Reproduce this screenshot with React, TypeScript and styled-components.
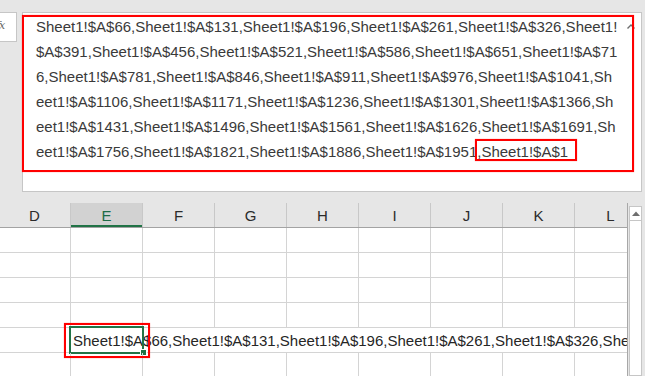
import React from "react";
import styled, { createGlobalStyle } from "styled-components";

const GlobalStyle = createGlobalStyle`
  html, body { margin: 0; padding: 0; background: #e6e6e6; overflow: hidden; }
  * { box-sizing: border-box; }
`;

const FONT = `"Liberation Sans", Arial, sans-serif`;

const Page = styled.div`
  position: relative;
  width: 645px;
  height: 376px;
  overflow: hidden;
  background: #e6e6e6;
  font-family: ${FONT};
`;

const FormulaArea = styled.div`
  display: flex;
  align-items: flex-start;
  gap: 5px;
  height: 203px;
  padding-top: 12px;
`;

const FxBox = styled.div`
  width: 30px;
  height: 30px;
  margin-left: -13px;
  background: #fff;
  border: 1px solid #c6c6c6;
  overflow: hidden;
  padding: 6px 0 0 8px;
  font-family: "DejaVu Serif", serif;
  font-style: italic;
  font-size: 11px;
  color: #666;
  letter-spacing: -1px;
`;

const FormulaBox = styled.div`
  position: relative;
  width: 620px;
  height: 180px;
  background: #fff;
  border: 1px solid #c6c6c6;
  padding: 1px 0 0 13px;
`;

const FormulaText = styled.div`
  width: 583px;
  font-size: 15px;
  line-height: 25px;
  color: #3a3a3a;
  word-break: break-all;
`;

const Caret = styled.svg`
  position: absolute;
  right: 6px;
  top: 11px;
`;

const SheetArea = styled.div`
  display: flex;
  height: 173px;
`;

const Grid = styled.div`
  width: 628px;
  height: 100%;
  overflow: hidden;
  background: #fff;
  border-right: 1px solid #a8a8a8;
`;

const HeaderRow = styled.div`
  display: flex;
  margin-left: -1px;
  height: 25px;
  background: #e6e6e6;
  border-bottom: 1px solid #a3a3a3;
`;

const HeaderCell = styled.div<{ $selected?: boolean }>`
  flex: 0 0 72px;
  height: 24px;
  display: flex;
  align-items: center;
  justify-content: center;
  font-size: 15px;
  color: ${(p) => (p.$selected ? "#1e6b47" : "#2b2b2b")};
  background: ${(p) => (p.$selected ? "#d2d2d2" : "transparent")};
  border-right: 1px solid #c8c8c8;
  box-shadow: ${(p) => (p.$selected ? "inset 0 -2px 0 #217346" : "none")};
`;

const Row = styled.div`
  display: flex;
  margin-left: -1px;
  height: 25px;
  border-bottom: 1px solid #d4d4d4;
`;

const Cell = styled.div<{ $noRight?: boolean }>`
  position: relative;
  flex: 0 0 72px;
  height: 24px;
  border-right: 1px solid ${(p) => (p.$noRight ? "transparent" : "#d4d4d4")};
  display: flex;
  align-items: center;
  overflow: visible;
`;

const CellText = styled.span`
  padding-left: 2px;
  white-space: nowrap;
  font-size: 15px;
  color: #262626;
`;

const ActiveBorder = styled.div`
  position: absolute;
  left: -2px;
  top: -2px;
  width: 75px;
  height: 28px;
  border: 2px solid #217346;
`;

const FillHandle = styled.div`
  position: absolute;
  left: 69px;
  top: 21px;
  width: 7px;
  height: 7px;
  background: #217346;
  border: 1px solid #fff;
`;

const ScrollBar = styled.div`
  flex: 1;
  display: flex;
  flex-direction: column;
  padding: 3px 3px 0 1px;
  background: #e6e6e6;
`;

const ScrollTrack = styled.div`
  flex: 1;
  background: #fff;
  border: 1px solid #c6c6c6;
  display: flex;
  flex-direction: column;
`;

const ScrollButton = styled.div`
  height: 14px;
  display: flex;
  align-items: center;
  justify-content: center;
  border-bottom: 1px solid #c6c6c6;
`;

const Mark = styled.div`
  position: absolute;
  border: 2px solid #ff0000;
  box-shadow: 0 0 1px rgba(255, 0, 0, 0.5);
  pointer-events: none;
`;

const columns = ["D", "E", "F", "G", "H", "I", "J", "K", "L"];

const refs =
  Array.from({ length: 30 }, (_, i) => `Sheet1!$A$${66 + 65 * i}`).join(",") +
  ",Sheet1!$A$1";

export default function App() {
  const rows = [0, 1, 2, 3, 4, 5];
  return (
    <Page>
      <GlobalStyle />
      <FormulaArea>
        <FxBox>fx</FxBox>
        <FormulaBox>
          <FormulaText>{refs}</FormulaText>
          <Caret width="8" height="5" viewBox="0 0 8 5">
            <path d="M0.5 4.5 L4 1 L7.5 4.5" fill="none" stroke="#6e6e6e" strokeWidth="1.4" />
          </Caret>
        </FormulaBox>
      </FormulaArea>
      <SheetArea>
        <Grid>
          <HeaderRow>
            {columns.map((c) => (
              <HeaderCell key={c} $selected={c === "E"}>
                {c}
              </HeaderCell>
            ))}
          </HeaderRow>
          {rows.map((r) => (
            <Row key={r}>
              {columns.map((c) => {
                const active = r === 4 && c === "E";
                const noRight = r === 4 && c !== "D";
                return (
                  <Cell key={c} $noRight={noRight}>
                    {active && (
                      <>
                        <CellText>{refs}</CellText>
                        <ActiveBorder />
                        <FillHandle />
                      </>
                    )}
                  </Cell>
                );
              })}
            </Row>
          ))}
        </Grid>
        <ScrollBar>
          <ScrollTrack>
            <ScrollButton>
              <svg width="8" height="5" viewBox="0 0 8 5">
                <path d="M0 5 L4 0.5 L8 5 Z" fill="#6e6e6e" />
              </svg>
            </ScrollButton>
          </ScrollTrack>
        </ScrollBar>
      </SheetArea>
      <Mark style={{ left: 22, top: 15, width: 612, height: 157 }} />
      <Mark style={{ left: 475, top: 139, width: 102, height: 22 }} />
      <Mark style={{ left: 64, top: 323, width: 86, height: 35 }} />
    </Page>
  );
}
